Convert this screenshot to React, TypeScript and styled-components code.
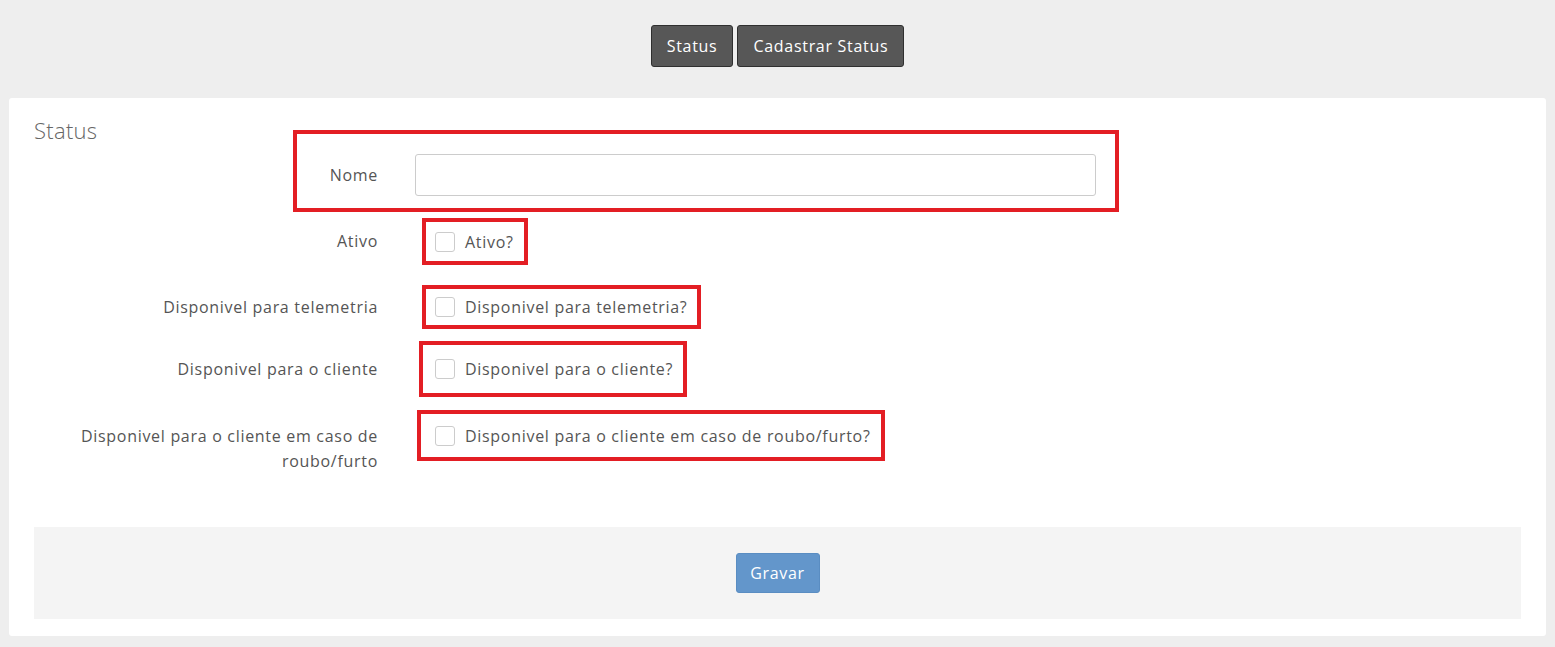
import React from "react";
import styled, { createGlobalStyle } from "styled-components";

const G = createGlobalStyle`
  body { margin: 0; background: #eeeeee; font-family: "Open Sans", "Liberation Sans", sans-serif; color: #555; letter-spacing: 0.7px; }
`;
const Top = styled.div`display:flex;justify-content:center;gap:4px;padding-top:25px;height:98px;box-sizing:border-box;`;
const NavBtn = styled.button`height:42px;padding:0 15px;background:#575757;color:#fff;border:1px solid #2f2f2f;border-radius:3px;font:16px "Open Sans",sans-serif;letter-spacing:0.7px;`;
const Panel = styled.div`margin:0 9px;background:#fff;border-radius:3px;padding:20px 25px 19px;height:538px;box-sizing:border-box;`;
const Title = styled.div`font-size:22px;font-weight:300;line-height:24px;color:#666;letter-spacing:0.3px;`;
const Red = styled.div<{ $ml: number; $h: number; $pl: number }>`
  border:4px solid #e31e24;display:flex;align-items:center;box-sizing:border-box;
  margin-left:${p=>p.$ml}px;height:${p=>p.$h}px;padding-left:${p=>p.$pl}px;padding-right:10px;
`;
const NomeBox = styled.div`border:4px solid #e31e24;margin-left:259px;margin-top:-12px;width:826px;height:82px;box-sizing:border-box;display:flex;align-items:flex-end;padding:0 19px 12px 0;`;
const NomeLabel = styled.div`width:81px;text-align:right;font-size:16px;line-height:42px;flex-shrink:0;`;
const Input = styled.input`margin-left:37px;flex:1;height:42px;border:1px solid #ccc;border-radius:3px;box-sizing:border-box;`;
const Row = styled.div<{ $top?: boolean }>`display:flex;align-items:${p=>p.$top?"flex-start":"center"};`;
const Label = styled.div<{ $pt?: number }>`width:344px;text-align:right;font-size:16px;line-height:25px;flex-shrink:0;padding-top:${p=>p.$pt||0}px;`;
const Box = styled.span`width:20px;height:20px;border:1px solid #ccc;border-radius:3px;box-sizing:border-box;margin-right:10px;flex-shrink:0;`;
const Text = styled.span`font-size:16px;white-space:nowrap;`;
const Footer = styled.div`margin-top:53px;background:#f4f4f4;height:92px;display:flex;align-items:center;justify-content:center;`;
const Save = styled.button`width:84px;height:40px;background:#6396cb;color:#fff;border:1px solid #5a8dc2;border-radius:3px;font:16px "Open Sans",sans-serif;letter-spacing:0.7px;`;

const rows = [
  { l: "Ativo", t: "Ativo?", ml: 44, mt: 6, h: 47, pl: 9 },
  { l: "Disponivel para telemetria", t: "Disponivel para telemetria?", ml: 44, mt: 20, h: 44, pl: 9 },
  { l: "Disponivel para o cliente", t: "Disponivel para o cliente?", ml: 41, mt: 12, h: 56, pl: 12 },
];

export default function App() {
  return (<>
    <G />
    <Top><NavBtn>Status</NavBtn><NavBtn>Cadastrar Status</NavBtn></Top>
    <Panel>
      <Title>Status</Title>
      <NomeBox><NomeLabel>Nome</NomeLabel><Input /></NomeBox>
      {rows.map(r => (
        <Row key={r.l} style={{ marginTop: r.mt }}>
          <Label>{r.l}</Label>
          <Red $ml={r.ml} $h={r.h} $pl={r.pl}><Box /><Text>{r.t}</Text></Red>
        </Row>
      ))}
      <Row $top style={{ marginTop: 13 }}>
        <Label $pt={14}>Disponivel para o cliente em caso de<br />roubo/furto</Label>
        <Red $ml={39} $h={51} $pl={14}><Box /><Text>Disponivel para o cliente em caso de roubo/furto?</Text></Red>
      </Row>
      <Footer><Save>Gravar</Save></Footer>
    </Panel>
  </>);
}
